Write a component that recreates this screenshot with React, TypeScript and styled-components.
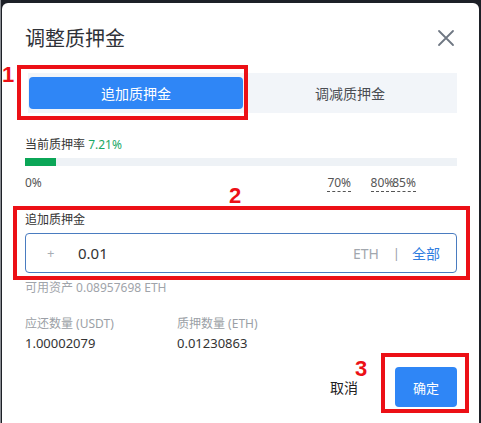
import React, { useState } from 'react';
import styled, { createGlobalStyle } from 'styled-components';

const GlobalStyle = createGlobalStyle`
  html, body {
    margin: 0;
    padding: 0;
    background: #1d2027;
    font-family: "Noto Sans", "Noto Sans CJK SC", sans-serif;
  }
`;

const Page = styled.div`
  width: 481px;
  height: 423px;
  padding: 3px 2px 0 2px;
  box-sizing: border-box;
  background: linear-gradient(90deg, #8a8d93 0px, #8a8d93 1px, #1d2027 1px);
  overflow: hidden;
`;

const Dialog = styled.div`
  position: relative;
  height: 420px;
  background: #fff;
  border-radius: 6px 6px 0 0;
  padding: 22px 22px 0 23px;
  box-sizing: border-box;
  color: #333;
`;

const Header = styled.div`
  display: flex;
  align-items: center;
  justify-content: space-between;
  height: 28px;
`;

const Title = styled.h2`
  margin: 0;
  font-size: 20px;
  font-weight: 400;
  line-height: 28px;
  color: #2f3238;
`;

const CloseButton = styled.button`
  border: none;
  background: none;
  padding: 0;
  width: 20px;
  height: 20px;
  margin: -2px 1px 0 0;
  display: flex;
  align-items: center;
  justify-content: center;
  color: #6f7783;
  cursor: pointer;
`;

const Tabs = styled.div`
  margin: 20px 0 0 3px;
  display: grid;
  grid-template-columns: 1fr 1fr;
  background: #f2f5f9;
  padding: 4px 0 4px 1px;
`;

const Tab = styled.button<{ $active?: boolean }>`
  height: 32px;
  border: none;
  border-radius: 4px;
  font-family: inherit;
  font-size: 14px;
  cursor: pointer;
  background: ${p => (p.$active ? '#2f86f6' : 'transparent')};
  color: ${p => (p.$active ? '#fff' : '#4a4d52')};
`;

const RateLabel = styled.div`
  margin-top: 24px;
  font-size: 12px;
  line-height: 16px;
  color: #333;
`;

const RateValue = styled.span`
  color: #1aa865;
`;

const Bar = styled.div`
  margin-top: 5px;
  height: 8px;
  background: #eef2f6;
`;

const BarFill = styled.div`
  height: 100%;
  background: #0ba657;
`;

const Scale = styled.div`
  position: relative;
  margin-top: 9px;
  height: 18px;
  font-size: 12px;
  line-height: 16px;
  color: #555;
`;

const Mark = styled.span<{ $dashed?: boolean }>`
  position: absolute;
  top: 0;
  border-bottom: ${p => (p.$dashed ? '1px dashed #555' : 'none')};
`;

const FieldLabel = styled.div`
  margin-top: 19px;
  font-size: 12px;
  line-height: 16px;
  color: #333;
`;

const InputBox = styled.div`
  margin-top: 5px;
  height: 40px;
  box-sizing: border-box;
  border: 1px solid #4a7cc0;
  border-radius: 4px;
  display: flex;
  align-items: center;
  padding: 0 16px 0 21px;
`;

const Plus = styled.span`
  font-size: 13px;
  color: #a8adb4;
  width: 31px;
`;

const AmountInput = styled.input`
  flex: 1;
  border: none;
  outline: none;
  font-family: inherit;
  font-size: 15px;
  color: #333;
  padding: 0;
  background: transparent;
`;

const Unit = styled.span`
  font-size: 14px;
  color: #a2a7ae;
`;

const Divider = styled.span`
  margin: 0 12px 0 14px;
  font-size: 13px;
  color: #9aa0a8;
`;

const AllLink = styled.span`
  font-size: 14px;
  color: #2f7ddf;
  cursor: pointer;
`;

const Available = styled.div`
  margin-top: 7px;
  font-size: 12px;
  line-height: 16px;
  color: #a0a4aa;
`;

const Stats = styled.div`
  margin-top: 20px;
  display: grid;
  grid-template-columns: 152px 152px;
`;

const StatLabel = styled.div`
  font-size: 12px;
  line-height: 16px;
  color: #9b9fa6;
`;

const StatValue = styled.div`
  margin-top: 3px;
  font-size: 13px;
  line-height: 16px;
  color: #333;
`;

const Footer = styled.div`
  margin-top: 16px;
  display: flex;
  justify-content: flex-end;
  align-items: center;
  gap: 37px;
`;

const CancelButton = styled.button`
  border: none;
  background: none;
  padding: 0;
  font-family: inherit;
  font-size: 14px;
  color: #222;
  cursor: pointer;
`;

const ConfirmButton = styled.button`
  width: 62px;
  height: 40px;
  border: none;
  border-radius: 4px;
  background: #2f86f6;
  color: #fff;
  font-family: inherit;
  font-size: 13px;
  cursor: pointer;
`;

/* red annotation overlays drawn over the screenshot */
const Marker = styled.div`
  position: absolute;
  border: 4px solid #ec1016;
  box-sizing: border-box;
  pointer-events: none;
`;

const MarkerNum = styled.span`
  position: absolute;
  font-family: "Liberation Sans", Arial, sans-serif;
  font-weight: 700;
  font-size: 22px;
  line-height: 22px;
  color: #ec1016;
`;

const marks = [
  { p: 0, label: '0%', dashed: false },
  { p: 70, label: '70%', dashed: true },
  { p: 80, label: '80%', dashed: true },
  { p: 85, label: '85%', dashed: true },
];

const CloseIcon = () => (
  <svg width="18" height="18" viewBox="0 0 18 18">
    <path d="M2 2 L16 16 M16 2 L2 16" stroke="currentColor" strokeWidth="1.8" strokeLinecap="round" />
  </svg>
);

export default function App() {
  const [tab, setTab] = useState<'add' | 'reduce'>('add');
  const [amount, setAmount] = useState('0.01');
  const rate = 7.21;

  return (
    <>
      <GlobalStyle />
      <Page>
        <Dialog>
          <Header>
            <Title>调整质押金</Title>
            <CloseButton>
              <CloseIcon />
            </CloseButton>
          </Header>

          <Tabs>
            <Tab $active={tab === 'add'} onClick={() => setTab('add')}>追加质押金</Tab>
            <Tab $active={tab === 'reduce'} onClick={() => setTab('reduce')}>调减质押金</Tab>
          </Tabs>

          <RateLabel>
            当前质押率 <RateValue>{rate}%</RateValue>
          </RateLabel>
          <Bar>
            <BarFill style={{ width: `${rate}%` }} />
          </Bar>
          <Scale>
            {marks.map(m => (
              <Mark key={m.label} $dashed={m.dashed} style={{ left: `${m.p}%` }}>
                {m.label}
              </Mark>
            ))}
          </Scale>

          <FieldLabel>追加质押金</FieldLabel>
          <InputBox>
            <Plus>+</Plus>
            <AmountInput value={amount} onChange={e => setAmount(e.target.value)} />
            <Unit>ETH</Unit>
            <Divider>|</Divider>
            <AllLink>全部</AllLink>
          </InputBox>
          <Available>可用资产 0.08957698 ETH</Available>

          <Stats>
            <div>
              <StatLabel>应还数量 (USDT)</StatLabel>
              <StatValue>1.00002079</StatValue>
            </div>
            <div>
              <StatLabel>质押数量 (ETH)</StatLabel>
              <StatValue>0.01230863</StatValue>
            </div>
          </Stats>

          <Footer>
            <CancelButton>取消</CancelButton>
            <ConfirmButton>确定</ConfirmButton>
          </Footer>

          <Marker style={{ left: 15, top: 62, width: 231, height: 55 }} />
          <MarkerNum style={{ left: 0, top: 61 }}>1</MarkerNum>
          <Marker style={{ left: 11, top: 203, width: 457, height: 74 }} />
          <MarkerNum style={{ left: 227, top: 182 }}>2</MarkerNum>
          <Marker style={{ left: 379, top: 350, width: 88, height: 60 }} />
          <MarkerNum style={{ left: 353, top: 355 }}>3</MarkerNum>
        </Dialog>
      </Page>
    </>
  );
}
